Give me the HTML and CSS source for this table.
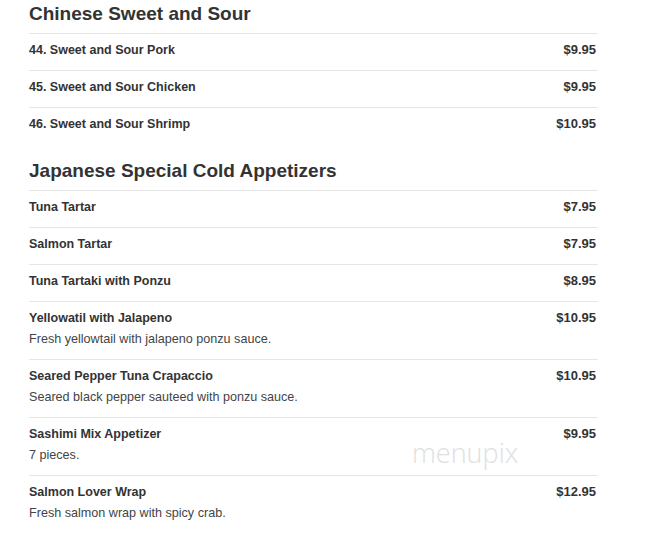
FILE: index.html
```html
<!DOCTYPE html>
<html>
<head>
<meta charset="utf-8">
<link rel="stylesheet" href="styles.css">
</head>
<body>
<div class="menu">
  <section class="section">
    <h2 class="section-title">Chinese Sweet and Sour</h2>
    <div class="item"><div class="item-head"><span class="name">44. Sweet and Sour Pork</span><span class="price">$9.95</span></div></div>
    <div class="item"><div class="item-head"><span class="name">45. Sweet and Sour Chicken</span><span class="price">$9.95</span></div></div>
    <div class="item"><div class="item-head"><span class="name">46. Sweet and Sour Shrimp</span><span class="price">$10.95</span></div></div>
  </section>
  <section class="section">
    <h2 class="section-title">Japanese Special Cold Appetizers</h2>
    <div class="item"><div class="item-head"><span class="name">Tuna Tartar</span><span class="price">$7.95</span></div></div>
    <div class="item"><div class="item-head"><span class="name">Salmon Tartar</span><span class="price">$7.95</span></div></div>
    <div class="item"><div class="item-head"><span class="name">Tuna Tartaki with Ponzu</span><span class="price">$8.95</span></div></div>
    <div class="item"><div class="item-head"><span class="name">Yellowatil with Jalapeno</span><span class="price">$10.95</span></div><p class="desc">Fresh yellowtail with jalapeno ponzu sauce.</p></div>
    <div class="item"><div class="item-head"><span class="name">Seared Pepper Tuna Crapaccio</span><span class="price">$10.95</span></div><p class="desc">Seared black pepper sauteed with ponzu sauce.</p></div>
    <div class="item"><div class="item-head"><span class="name">Sashimi Mix Appetizer</span><span class="price">$9.95</span></div><p class="desc">7 pieces.</p></div>
    <div class="item"><div class="item-head"><span class="name">Salmon Lover Wrap</span><span class="price">$12.95</span></div><p class="desc">Fresh salmon wrap with spicy crab.</p></div>
  </section>
</div>
<div class="watermark">menupix</div>
</body>
</html>
```
FILE: styles.css
```css
html, body {
  margin: 0;
  padding: 0;
  background: #fff;
}
body {
  font-family: "Liberation Sans", Arial, sans-serif;
  color: #333;
  position: relative;
  min-height: 535px;
}
.menu {
  width: 569px;
  padding: 2px 0 0 29px;
}
.section + .section {
  margin-top: 15px;
}
.section-title {
  margin: 0 0 7px;
  font-size: 19px;
  line-height: 24px;
  font-weight: bold;
  color: #333;
}
.item {
  border-top: 1px solid #e6e6e6;
  padding: 8px 2px 12px 0;
}
.item-head {
  display: flex;
  justify-content: space-between;
  font-size: 12.5px;
  line-height: 16px;
  font-weight: bold;
}
.price {
  font-size: 13px;
}
.desc {
  margin: 5px 0 0;
  font-size: 12.6px;
  line-height: 16px;
  color: #444;
}
.watermark {
  position: absolute;
  left: 412px;
  top: 434px;
  font-family: "Open Sans", sans-serif;
  font-weight: 300;
  font-size: 27px;
  color: #e0e0e0;
}
```
